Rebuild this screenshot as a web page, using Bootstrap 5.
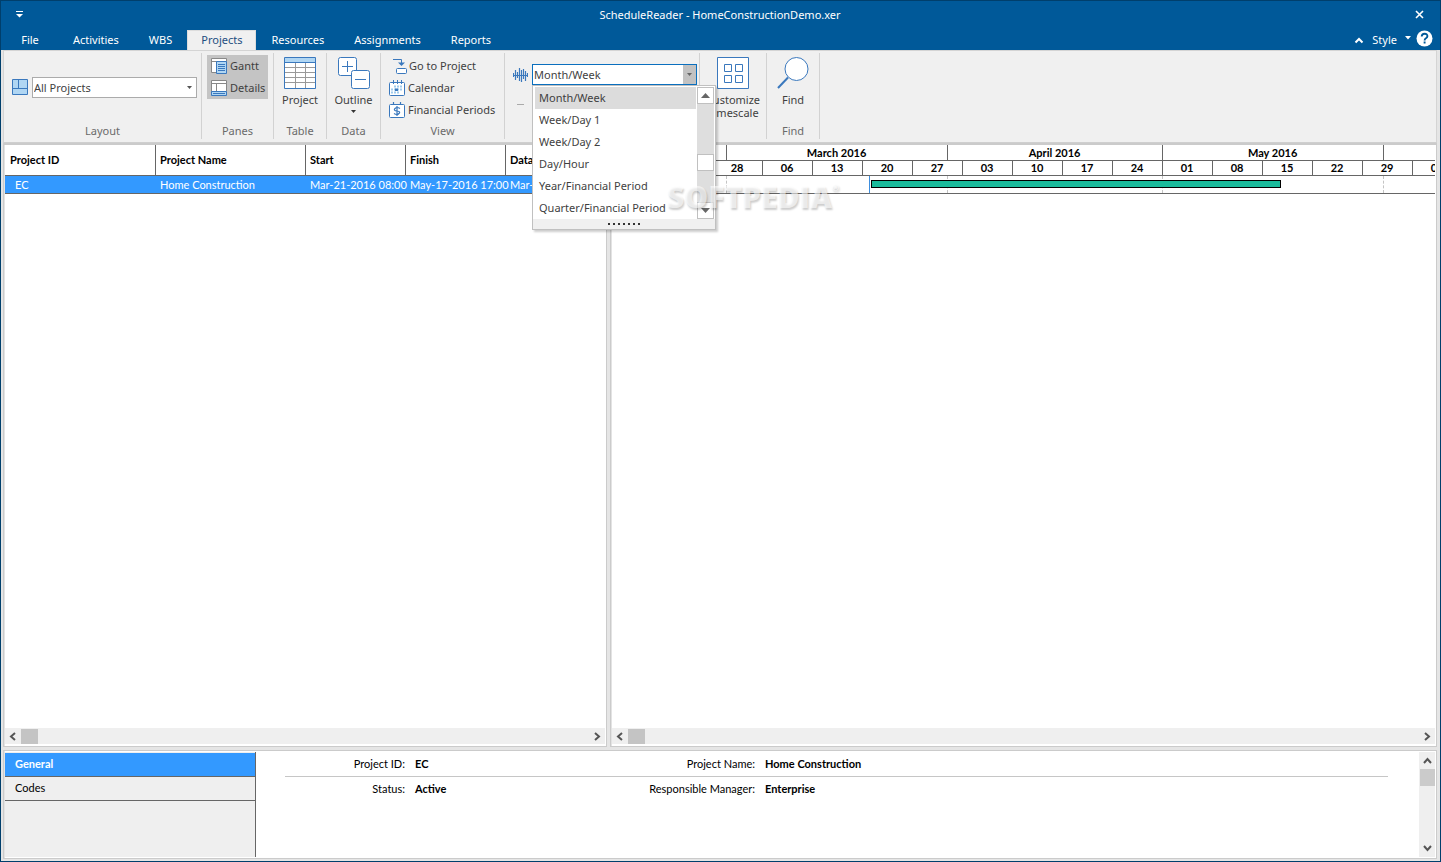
<!DOCTYPE html>
<html lang="en">
<head>
<meta charset="utf-8">
<meta name="viewport" content="width=device-width, initial-scale=1">
<title>ScheduleReader - HomeConstructionDemo.xer</title>
<link rel="stylesheet" href="https://cdn.jsdelivr.net/npm/bootstrap@5.3.0/dist/css/bootstrap.min.css">
<style>
:root { --blue:#005999; --edge:#003f6c; --ribbon:#f0f0f0; --frame:#e5e5e5; --line:#cbcbcb; --rule:#666; --sel:#3399ff; --ink:#3f3f3f; --ico:#3a78bd; --pale:#b0d6f3; }
body { font-family:"Noto Sans","Open Sans",sans-serif; font-size:11px; line-height:14px; color:var(--ink); background:var(--frame); }
button, select { font:inherit; color:inherit; }
button { border:0; background:none; padding:0; }
svg { display:block; flex:none; }
.app-window { min-height:100vh; border:1px solid var(--edge); }
.title-bar { background:var(--blue); color:#fff; }
.title-row { height:29px; padding:0 16px 2px 15px; }
.title-row > * { flex:1; }
.tab-row { height:20px; padding:0 7px 0 1px; }
.tab-row a { color:#fff; text-decoration:none; padding:3px 15px; height:20px; }
.tab-row a.file-tab { width:56px; padding:3px 0; text-align:center; }
.tab-row a.current { background:var(--ribbon); color:#1e4e80; border:1px solid #ddd; border-bottom:0; padding:2px 13px; }
.ribbon { background:var(--ribbon); margin:0 3px 0 2px; border:1px solid #d4d4d4; border-bottom-color:#cfcfcf; height:93px; padding-top:2px; }
.ribbon-group { height:86px; border-right:1px solid #d2d2d2; }
.group-name { margin-top:auto; height:15px; color:#6a6a6a; text-align:center; }
.ribbon-group .row-btn { height:22px; display:flex; align-items:center; gap:3px; white-space:nowrap; }
.pane-toggles { background:#c4c4c4; width:61px; margin-top:2px; }
.big-btn { display:flex; flex-direction:column; align-items:center; padding-top:4px; }
.big-btn span { margin-top:4px; line-height:13px; }
.combo { appearance:none; width:165px; height:21px; border:1px solid #ababab; border-radius:0; background:#fff; padding:0 1px; outline:0; }
.combo-box { position:relative; }
.combo-box > .arrow { position:absolute; right:1px; top:1px; width:13px; height:19px; display:flex; align-items:center; justify-content:center; pointer-events:none; }
.combo-box.open > .combo { border-color:#0a6fbe; }
.combo-box.open > .arrow { background:#c2c2c2; }
.drop-list { position:absolute; left:0; top:21px; z-index:10; width:184px; background:#fff; border:1px solid #c0c0c0; box-shadow:2px 2px 2px #0003; padding-top:1px; }
.drop-list button { display:block; width:161px; height:22px; margin-left:2px; padding:0 4px; text-align:left; white-space:nowrap; }
.drop-list button.picked { background:#dcdcdc; }
.list-scroll { width:17px; background:#dedede; margin-right:1px; }
.list-scroll span { height:17px; border:1px solid #c0c0c0; background:#fff; display:flex; align-items:center; justify-content:center; }
.list-scroll .knob { margin:50px 0 auto; }
.grip { height:10px; background:var(--ribbon); gap:3px; }
.grip i { width:2px; height:2px; background:#333; }
.workspace { display:grid; grid-template-columns:604fr 828fr; gap:3px; padding:0 3px 0 2px; flex:1; }
.pane { min-width:0; border:1px solid var(--line); border-width:2px 1px 1px; background:#fff; box-shadow:inset 1px 0 #e3e3e3; padding:0 1px 2px; font-family:"Lato","Noto Sans",sans-serif; color:#000; }
.data-grid { width:100%; table-layout:fixed; border-collapse:separate; border-spacing:0; }
.data-grid th { height:31px; border-right:1px solid var(--rule); border-bottom:1px solid var(--rule); padding:0 4px; }
.data-grid th:last-child { border-right:0; }
.data-grid td { height:18px; background:var(--sel); color:#fff; border-bottom:1px solid var(--rule); padding:0 0 0 4px; }
.data-grid th, .data-grid td { white-space:nowrap; vertical-align:middle; }
.data-grid tr > :first-child { padding-left:5px; }
.data-grid td:first-child { padding-left:10px; }
.hscroll { height:16px; background:#efefef; padding:0 4px; }
.hscroll .thumb { width:17px; height:15px; background:#c4c4c4; margin-left:4px; }
.scale-row { display:flex; height:15px; overflow:hidden; border-bottom:1px solid var(--rule); font-weight:700; text-align:center; line-height:14px; }
.scale-row.months { height:16px; line-height:15px; }
.scale-row span { flex:none; border-right:1px solid var(--rule); white-space:nowrap; }
.scale-row .week { width:50px; }
.gantt-row { position:relative; height:18px; border-bottom:1px solid var(--rule); overflow:hidden; }
.gantt-row i { position:absolute; top:0; height:17px; border-left:1px dashed #c4c4c4; }
.gantt-row i.data-date { border-left:1px solid #3e8ede; }
.gantt-row b { position:absolute; top:4px; height:8px; background:#1abc9c; border:1px solid #000; }
.stamp { position:absolute; left:666px; top:179px; z-index:20; font:800 30px/34px "Open Sans",sans-serif; color:#fff9; text-shadow:1px 2px 2px #0003; pointer-events:none; }
.stamp sup { font-size:9px; top:-17px; }
.lower { margin:3px 3px 2px 2px; height:109px; border-top-width:1px; display:flex; padding:1px; }
.side-nav { width:251px; background:#efefef; border-right:1px solid var(--rule); padding-top:1px; }
.side-nav a { display:flex; align-items:center; height:24px; padding:0 10px 2px; border-bottom:1px solid var(--rule); color:#000; text-decoration:none; }
.side-nav a.current { background:var(--sel); color:#fff; font-weight:700; }
.facts { flex:1; padding:0 31px 0 29px; }
.fact-row { display:grid; grid-template-columns:120px 210px 120px 1fr; column-gap:10px; height:23px; align-items:center; margin:0; }
.fact-row:first-child { border-bottom:1px solid #c6c6c6; height:25px; }
.fact-row dt { font-weight:400; text-align:right; }
.fact-row dd { font-weight:700; margin:0; }
.vscroll { width:16px; background:#efefef; padding:5px 0; }
.vscroll .thumb { width:15px; height:17px; background:#cbcbcb; margin-top:4px; }
</style>
</head>
<body>
<div class="app-window d-flex flex-column position-relative">
  <header class="title-bar">
    <div class="title-row d-flex align-items-center">
      <div><button aria-label="Customize toolbar" class="d-block"><svg width="7" height="7"><path d="M0 .5H7" stroke="#fff"/><path d="M0 3H7L3.500 6.500Z" fill="#fff"/></svg></button></div>
      <div class="text-center text-nowrap">ScheduleReader - HomeConstructionDemo.xer</div>
      <div><button aria-label="Close" class="d-block ms-auto"><svg width="9" height="9"><path d="M1 1L8 8M8 1L1 8" stroke="#fff" stroke-width="1.600"/></svg></button></div>
    </div>
    <nav class="tab-row d-flex">
      <a class="file-tab" href="#">File</a><a href="#">Activities</a><a href="#">WBS</a><a class="current" href="#">Projects</a><a href="#">Resources</a><a href="#">Assignments</a><a href="#">Reports</a>
      <div class="ms-auto d-flex align-items-center">
        <button aria-label="Collapse ribbon"><svg width="10" height="7"><path d="M1.500 5.500L5 2L8.500 5.500" fill="none" stroke="#fff" stroke-width="2"/></svg></button>
        <button class="d-flex align-items-center ms-1 ps-1">Style <svg class="ms-2 mb-1" width="7" height="5"><path d="M0 0H6L3 3.500Z" fill="#fff"/></svg></button>
        <button class="ms-1 mb-1" aria-label="Help"><svg width="17" height="17"><circle cx="8.500" cy="8.500" r="8" fill="#fff"/><path d="M5.700 6.500Q5.700 3.700 8.600 3.700T11.400 6.300Q11.400 7.400 10 8.200T8.600 10.400M8.600 11.600V13.600" fill="none" stroke="#005999" stroke-width="1.900"/></svg></button>
      </div>
    </nav>
  </header>

  <section class="ribbon d-flex">
    <div class="ribbon-group d-flex flex-column" style="width:198px">
      <div class="d-flex align-items-center gap-1 ps-2 pt-4">
        <svg width="16" height="17"><path d="M.5 .5H15.500V15.500H.5Z" fill="#b0d6f3" stroke="#3a78bd"/><path d="M6.500 1V9.500M1 9.500H15" stroke="#3a78bd"/></svg>
        <div class="combo-box"><select class="combo" aria-label="Layout"><option>All Projects</option></select><span class="arrow"><svg width="5" height="3"><path d="M0 0H5L2.500 3Z" fill="#555"/></svg></span></div>
      </div>
      <div class="group-name">Layout</div>
    </div>
    <div class="ribbon-group d-flex flex-column" style="width:72px">
      <div class="pane-toggles mx-auto ps-1">
        <button class="row-btn"><svg width="16" height="16"><path d="M.5 .5H15.500V14.500H.5Z" fill="#fff" stroke="#888"/><path d="M1 3.500H15M5.500 4V14" stroke="#888"/><path d="M5.500 3.500H15.500V15.500H5.500Z" fill="#b0d6f3" stroke="#3a78bd"/><path d="M7 6.500H14M7 8.500H14M7 10.500H14M7 12.500H14" stroke="#3a78bd"/></svg>Gantt</button>
        <button class="row-btn"><svg width="16" height="16"><path d="M.5 .5H15.500V14.500H.5Z" fill="#fff" stroke="#888"/><path d="M1 3.500H15M5.500 4V11" stroke="#888"/><path d="M.5 11.500H15.500V15.500H.5Z" fill="#b0d6f3" stroke="#3a78bd"/><path d="M2 13.500H14" stroke="#3a78bd"/></svg>Details</button>
      </div>
      <div class="group-name">Panes</div>
    </div>
    <div class="ribbon-group d-flex flex-column" style="width:53px">
      <button class="big-btn"><svg width="32" height="32"><path d="M.5 .5H31.500V31.500H.5Z" fill="#fff"/><path d="M1 1H31V6H1Z" fill="#b0d6f3"/><path d="M1 10.500H31M1 15.500H31M1 20.500H31M1 25.500H31M11.500 6V31M21.500 6V31" stroke="#999"/><path d="M.5 .5H31.500V31.500H.5ZM1 5.500H31" fill="none" stroke="#3a78bd"/></svg><span>Project</span></button>
      <div class="group-name">Table</div>
    </div>
    <div class="ribbon-group d-flex flex-column" style="width:54px">
      <button class="big-btn"><svg width="32" height="32"><g fill="#fff" stroke="#3a78bd"><rect x=".5" y=".5" width="18" height="18" rx="2"/><path d="M4 9.500H15M9.500 4V15"/><rect x="13.500" y="13.500" width="18" height="18" rx="2"/><path d="M17 22.500H28"/></g></svg><span>Outline</span><svg width="5" height="8"><path d="M0 4H5L2.500 7Z" fill="#333"/></svg></button>
      <div class="group-name">Data</div>
    </div>
    <div class="ribbon-group d-flex flex-column" style="width:124px">
      <div class="ps-2" style="padding-top:2px">
        <button class="row-btn ms-1"><svg width="16" height="16"><path d="M0 1.500H8.500V5" fill="none" stroke="#3a78bd"/><path d="M5 4.500H12L8.500 8Z" fill="#3a78bd"/><rect x="3.500" y="10.500" width="10" height="5" rx="1" fill="#fff" stroke="#3a78bd"/></svg><span style="margin-left:-3px">Go to Project</span></button>
        <button class="row-btn"><svg width="16" height="16"><rect x=".5" y="2.500" width="15" height="13" rx="1" fill="#fff" stroke="#3a78bd"/><path d="M4.500 0V4M8.500 0V4M12.500 0V4" stroke="#3a78bd"/><path d="M5 6.500H14M2 9.500H14M2 12.500H11" stroke="#9fcbed" stroke-width="2" stroke-dasharray="2 1"/><path d="M6 8.500H9V11H6Z" fill="#3a78bd"/></svg>Calendar</button>
        <button class="row-btn"><svg width="16" height="16"><rect x=".5" y="2.500" width="15" height="13" rx="1" fill="#fff" stroke="#3a78bd"/><path d="M4.500 0V3M11.500 0V3M8 4V14M11 6.500Q8 4.500 6 6.500T8 9T10 11.500T5 11.500" fill="none" stroke="#3a78bd" stroke-width="1.200"/></svg>Financial Periods</button>
      </div>
      <div class="group-name">View</div>
    </div>
    <div class="ribbon-group d-flex" style="width:262px">
      <div class="ps-2 d-flex flex-column gap-2" style="width:195px;height:80px;border-right:1px solid #d2d2d2;padding-top:11px">
        <div class="d-flex align-items-center gap-1">
          <svg width="15" height="16"><path d="M.5 6V10M2.500 3V13M4.500 5V11M6.500 1V14M8.500 3V15M10.500 2V12M12.500 4V14M14.500 6V10M0 8.500H15" stroke="#3a78bd" stroke-width="1.200"/></svg>
          <div class="combo-box open"><select class="combo" aria-label="Timescale"><option>Month/Week</option></select><span class="arrow"><svg width="5" height="3"><path d="M0 0H5L2.500 3Z" fill="#666"/></svg></span>
            <div class="drop-list">
              <div class="d-flex justify-content-between">
                <div><button class="picked">Month/Week</button><button>Week/Day 1</button><button>Week/Day 2</button><button>Day/Hour</button><button>Year/Financial Period</button><button>Quarter/Financial Period</button></div>
                <div class="list-scroll d-flex flex-column"><span><svg width="9" height="5"><path d="M0 5L4.500 0L9 5Z" fill="#666"/></svg></span><span class="knob"></span><span><svg width="9" height="5"><path d="M0 0H9L4.500 5Z" fill="#666"/></svg></span></div>
              </div>
              <div class="grip d-flex justify-content-center align-items-center"><i></i><i></i><i></i><i></i><i></i><i></i><i></i></div>
            </div>
          </div>
        </div>
        <svg class="ms-1" width="7" height="19"><path d="M0 11.500H7" stroke="#aaa"/></svg>
      </div>
      <button class="big-btn flex-fill"><svg width="32" height="32"><path d="M.5 .5H31.500V31.500H.5ZM7.500 7.500H14.500V14.500H7.500ZM18.500 7.500H25.500V14.500H18.500ZM7.500 18.500H14.500V25.500H7.500ZM18.500 18.500H25.500V25.500H18.500Z" fill="#fff" stroke="#3a78bd"/></svg><span>Customize<br>Timescale</span></button>
    </div>
    <div class="ribbon-group d-flex flex-column" style="width:53px">
      <button class="big-btn"><svg width="32" height="32"><circle cx="19.500" cy="12" r="11.500" fill="#fff" stroke="#3a78bd"/><path d="M11 20.500L1 31" stroke="#3a78bd" stroke-width="2"/></svg><span>Find</span></button>
      <div class="group-name">Find</div>
    </div>
  </section>

  <main class="workspace">
    <section class="pane d-flex flex-column">
      <table class="data-grid">
        <colgroup><col style="width:151px"><col style="width:150px"><col style="width:100px"><col style="width:100px"><col></colgroup>
        <thead><tr><th>Project ID</th><th>Project Name</th><th>Start</th><th>Finish</th><th>Data Date</th></tr></thead>
        <tbody><tr><td>EC</td><td>Home Construction</td><td>Mar-21-2016 08:00</td><td>May-17-2016 17:00</td><td>Mar-21-2016</td></tr></tbody>
      </table>
      <div class="hscroll d-flex align-items-center mt-auto"><svg width="8" height="9"><path d="M6 1L2 4.500L6 8" fill="none" stroke="#555" stroke-width="2"/></svg><span class="thumb"></span><svg class="ms-auto" width="8" height="9"><path d="M2 1L6 4.500L2 8" fill="none" stroke="#555" stroke-width="2"/></svg></div>
    </section>
    <section class="pane d-flex flex-column">
      <div class="scale-row months"><span style="width:115px"></span><span style="width:221px">March 2016</span><span style="width:215px">April 2016</span><span style="width:221px">May 2016</span></div>
      <div class="scale-row"><span style="width:101px"></span><span class="week">28</span><span class="week">06</span><span class="week">13</span><span class="week">20</span><span class="week">27</span><span class="week">03</span><span class="week">10</span><span class="week">17</span><span class="week">24</span><span class="week">01</span><span class="week">08</span><span class="week">15</span><span class="week">22</span><span class="week">29</span><span class="week">05</span></div>
      <div class="gantt-row"><i style="left:114px"></i><i style="left:335px"></i><i style="left:550px"></i><i style="left:771px"></i><i class="data-date" style="left:257px"></i><b style="left:259px;width:410px"></b></div>
      <div class="hscroll d-flex align-items-center mt-auto"><svg width="8" height="9"><path d="M6 1L2 4.500L6 8" fill="none" stroke="#555" stroke-width="2"/></svg><span class="thumb"></span><svg class="ms-auto" width="8" height="9"><path d="M2 1L6 4.500L2 8" fill="none" stroke="#555" stroke-width="2"/></svg></div>
    </section>
  </main>

  <section class="pane lower">
    <nav class="side-nav"><a class="current" href="#">General</a><a href="#">Codes</a></nav>
    <div class="facts">
      <dl class="fact-row"><dt>Project ID:</dt><dd>EC</dd><dt>Project Name:</dt><dd>Home Construction</dd></dl>
      <dl class="fact-row"><dt>Status:</dt><dd>Active</dd><dt>Responsible Manager:</dt><dd>Enterprise</dd></dl>
    </div>
    <div class="vscroll d-flex flex-column align-items-center"><svg width="9" height="8"><path d="M1 6L4.500 2L8 6" fill="none" stroke="#555" stroke-width="2"/></svg><span class="thumb"></span><svg class="mt-auto" width="9" height="8"><path d="M1 2L4.500 6L8 2" fill="none" stroke="#555" stroke-width="2"/></svg></div>
  </section>
  <div class="stamp" aria-hidden="true">SOFTPEDIA<sup>®</sup></div>
</div>
<script src="https://cdn.jsdelivr.net/npm/bootstrap@5.3.0/dist/js/bootstrap.bundle.min.js"></script>
</body>
</html>
